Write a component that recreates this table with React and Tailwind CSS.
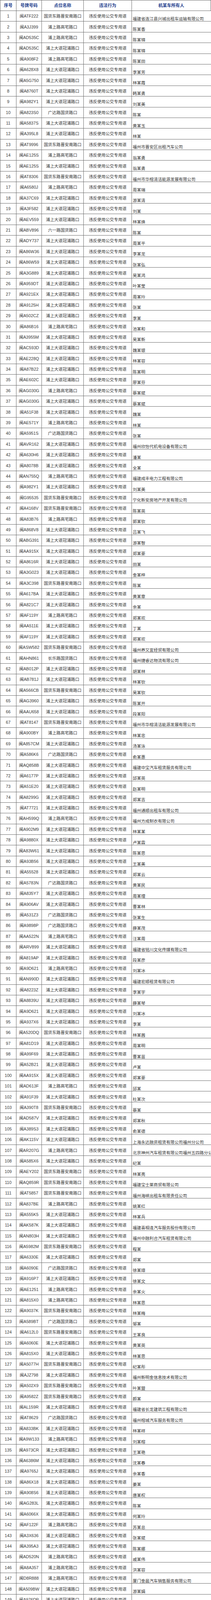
const places = {
  A: "浦上大道冠浦路口",
  B: "浦上路高宅路口",
  C: "国货东路晋安南路口",
  D: "广达路国货路口",
  E: "六一路国货路口",
  F: "长乐路国货路口",
};

// 号牌|点位|所有人
const raw = `闽ATF222|C|福建省连江县兴城出租车运输有限公司
闽A3J399|B|陈某香
闽AD535C|B|陈某锦
闽AD535C|A|陈某锦
闽A908F2|B|陈某田
闽A628X8|A|李某芳
闽A5G750|A|林某霞
闽A8760T|A|韩某勇
闽A982Y1|A|刘某美
闽A823S0|D|陈某
闽A5837S|A|黄某玉
闽A395L8|A|林某
闽AT9996|C|福州市晋安区出租汽车公司
闽AE125S|B|翁某勇
闽AE125S|A|翁某勇
闽AT8306|C|福州市华榕清洁能源发展有限公司
闽A6580J|B|周某瑞
闽A37C69|A|游某清
闽A3F582|A|刘某
闽AEV559|A|林某焕
闽ABV896|E|陈某
闽ADY737|A|周某平
闽A86W36|A|李某龙
闽A86W59|A|张某弘
闽A3G889|A|吴某鸿
闽A959DT|A|叶某莹
闽A921EX|A|周某玲
闽A9125H|A|张某
闽A502CZ|A|李某
闽A86B16|B|池某和
闽A3955M|A|吴某新
闽AC593D|A|魏某银
闽AE228Q|A|林某容
闽A87B22|A|陈某明
闽AE602C|A|廖某芬
闽AG030G|B|蔡某斌
闽AG030G|A|蔡某斌
闽A51F38|A|魏某
闽AE571Y|B|林某
闽A5951S|D|张某
闽AVR162|A|福州欣怡代机电设备有限公司
闽A630H6|A|潘某
闽A8078B|A|全某
闽AN755Q|B|福建成丰电力工程有限公司
闽A982Y1|A|刘某美
闽G95535|C|宁化新安房地产开发有限公司
闽A4168V|C|陈某英
闽A83B76|B|郭某钦
闽A868V8|A|吕某飞
闽ABG391|A|游某智
闽AA915X|A|郑某豪
闽A8616R|A|田某
闽A3G023|A|金某梓
闽A3C398|C|陈某
闽A617BA|A|黄某章
闽A821C7|A|余某
闽AF119Y|B|郑某欢
闽AA511E|A|丁某
闽AF119Y|A|郑某欢
闽ASW582|C|福州养又宜经贸有限公司
闽AHN861|F|福州捷睿达物流有限公司
闽AB012P|A|胡某林
闽AB781J|A|林某钦
闽A566CB|C|吴某钦
闽AG3960|A|陈某开
闽AAU658|A|段某阳
闽AT8147|C|福州市华榕清洁能源发展有限公司
闽A900BY|B|林某忠
闽A857CM|A|汤某泳
闽A586K6|D|俞某惠
闽AQ858B|A|福建中宝汽车租赁服务有限公司
闽A6177P|A|邱某英
闽A51E20|A|赵某明
闽A8299G|A|郑某吉
闽AT7721|A|福州通顺出租车有限公司
闽AH599Q|B|福州方成制衣有限公司
闽A902M9|A|林某某
闽A9880X|A|卢某霖
闽A83W61|A|陈某思
闽A93B56|A|王某美
闽A55528|A|郑某云
闽A5783N|D|黄某民
闽A835Y7|A|周某理
闽A906AV|A|曹某林
闽A531Z3|D|张某生
闽A9898P|D|薛某茂
闽AA522N|B|汪某周
闽ARV899|A|福建省铭川文化传媒有限公司
闽A819AP|A|段某彦
闽A9D621|B|刘某冰
闽AN990D|A|福建宏顺租赁有限公司
闽A8223Z|A|李某宇
闽A8839U|A|薛某琴
闽A9D621|A|刘某冰
闽A937X6|A|李某
闽A520DQ|C|林某茜
闽A81D19|A|周某明
闽A99F69|A|曹某苗
闽A52B21|A|卢某
闽AA915X|A|郑某豪
闽AD613F|B|邱某
闽A91F39|A|杜某次
闽A390T8|C|蔡某
闽AD587V|A|郑某秋
闽A389S3|A|俞某德
闽AK115V|A|上海永达融资租赁有限公司福州分公司
闽AR207G|B|北京神州汽车租赁有限公司福州五四路分公司
闽A585X6|A|纪某
闽AEY202|C|林某亮
闽AQ859R|C|福建宝士莱商贸有限公司
闽AT5857|C|福州海峡出租车有限责任公司
闽A837BE|B|姚某红
闽A555K5|A|林某兵
闽AK587K|A|福建喜相逢汽车服务股份有限公司
闽AN803H|A|福州中融利合汽车租赁有限公司
闽A5982M|C|程某
闽A6330E|A|郑某
闽A6090E|D|徐某璋
闽A916P7|A|徐某文
闽AE1251|B|余某火
闽A815X0|B|林某思
闽A9037K|C|林某梅
闽A589BT|D|邹某
闽A612L0|C|王某良
闽A6060E|A|黄某英
闽A815X0|A|林某思
闽A5077H|C|纪某彤
闽AJZ798|A|福州新明金信息技术有限公司
闽A502X9|C|叶某盟
闽A9582Z|C|颜某
闽AL159R|A|福建省长龙建筑工程有限公司
闽AT8629|D|福州榕城汽车服务有限公司
闽A833BK|A|林某祥
闽A9W133|B|刘某榕
闽A973CR|A|王某艳
闽A6386M|A|沈某春
闽A9765J|A|余某香
闽A86X18|A|姜某
闽A908S6|A|唐某权
闽AG283L|A|陈某
闽A6066X|A|何某玲
闽AF122F|B|苏某总
闽A3X636|A|张某斌
闽A395A3|A|陈某娜
闽AD520N|B|戚某伟
闽A8A357|B|洪某容
闽D8R888|B|厦门金晨汽车销售服务有限公司
闽A509BW|A|游某娟
闽A976DP|A|林某峰
闽A857S2|A|陈某庆`;

const rows = raw.split("\n").map((line, i) => {
  const [plate, p, owner] = line.split("|");
  return { id: i + 1, plate, place: places[p], owner };
});

const cols = "grid grid-cols-[41px_65px_107px_123px_1fr]";
const cell = "border-r border-[#6b6b6b] flex items-center justify-center whitespace-nowrap";

function App() {
  return (
    <div className="w-[539px] overflow-hidden bg-white border-l border-[#6b6b6b] text-[10.7px] text-[#383838] font-['Liberation_Sans','Noto_Sans_CJK_SC',sans-serif]">
      <div className={`${cols} h-[28px] border-y border-[#6b6b6b] font-bold text-[11px] text-[#1d3c8c]`}>
        <div className={cell}>序号</div>
        <div className={cell}>号牌号码</div>
        <div className={cell}>点位名称</div>
        <div className={cell}>违法行为</div>
        <div className={cell}>机某车所有人</div>
      </div>
      {rows.map((r) => (
        <div key={r.id} className={`${cols} h-[27.4px] border-b border-[#6b6b6b]`}>
          <div className={cell}>{r.id}</div>
          <div className={cell}>{r.plate}</div>
          <div className={cell}>{r.place}</div>
          <div className={cell}>违反使用公交专用道</div>
          <div className="flex items-end pl-[2px] pb-[1px] leading-none whitespace-nowrap overflow-hidden">{r.owner}</div>
        </div>
      ))}
    </div>
  );
}

export default App;
